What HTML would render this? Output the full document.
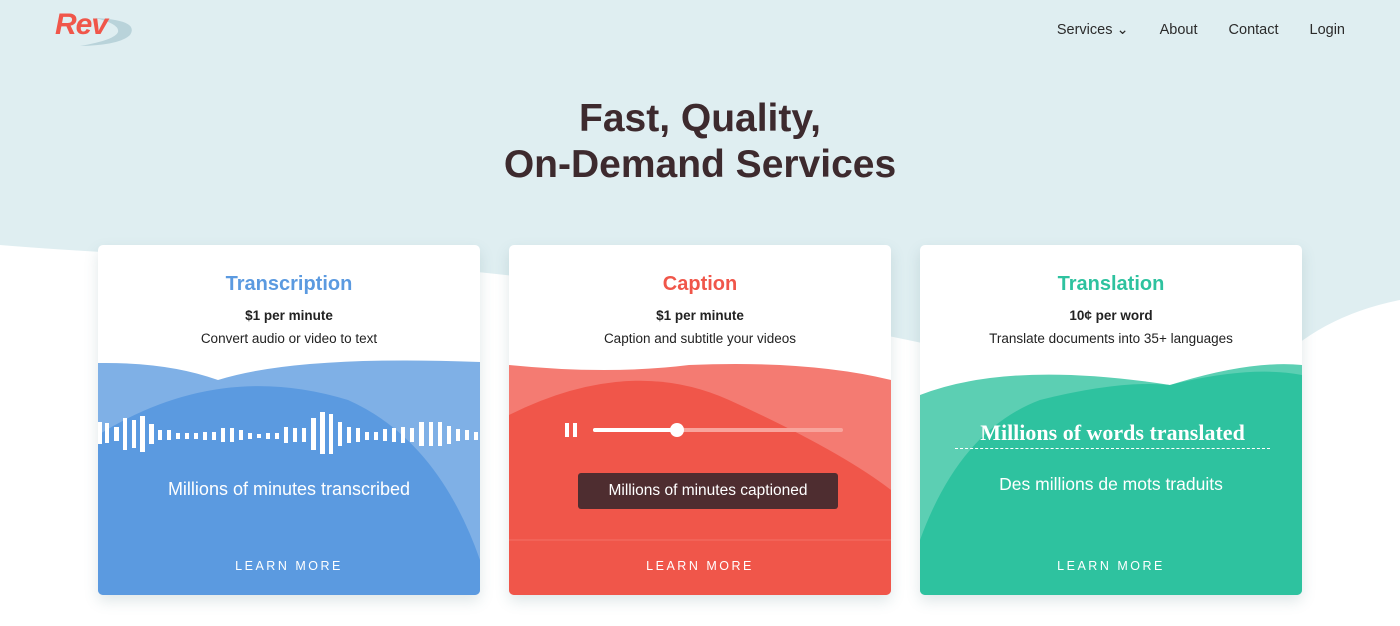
<!DOCTYPE html>
<html><head><meta charset="utf-8"><style>
*{margin:0;padding:0;box-sizing:border-box}
body{width:1400px;height:626px;overflow:hidden;background:#fff;font-family:"Liberation Sans",sans-serif;position:relative}
.bg{position:absolute;left:0;top:0}
.logo{position:absolute;left:55px;top:8px;font:italic 900 30px "Liberation Sans",sans-serif;color:#f0564a;letter-spacing:-1px}
nav{position:absolute;top:22px;right:55px;display:flex;gap:31px;font-size:14.5px;color:#2b2b2b}
h1{position:absolute;top:96px;left:0;width:1400px;text-align:center;font-size:39px;line-height:46px;font-weight:bold;color:#3d2a2e}
.card{position:absolute;top:245px;width:382px;height:350px;background:#fff;border-radius:5px;overflow:hidden;box-shadow:0 6px 14px rgba(80,120,130,.18)}
.card h2{position:absolute;top:28px;width:100%;text-align:center;font-size:20px;font-weight:bold}
.card .p{position:absolute;top:63px;width:100%;text-align:center;font-size:13.5px;font-weight:bold;color:#222}
.card .d{position:absolute;top:86px;width:100%;text-align:center;font-size:13.5px;color:#222}
.card svg{position:absolute;left:0;top:115px}
.lm{position:absolute;top:314px;width:100%;text-align:center;color:#fff;font-size:12.5px;letter-spacing:2.5px}
.t{position:absolute;width:100%;text-align:center;color:#fff;font-size:18px}
</style></head><body>
<svg class="bg" width="1400" height="626"><path d="M0,0 H1400 V300 Q1300,320 1250,395 Q1180,400 1000,360 Q600,270 300,260 Q120,255 0,245 Z" fill="#dfeef1"/></svg>
<svg class="bg" width="160" height="60"><path d="M95,18 Q140,20 130,35 Q120,45 80,46 Q115,40 118,32 Q120,24 95,18Z" fill="#b9d3da"/></svg>
<div class="logo">Rev</div>
<nav><span>Services ⌄</span><span>About</span><span>Contact</span><span>Login</span></nav>
<h1>Fast, Quality,<br>On-Demand Services</h1>

<div class="card" style="left:98px">
<h2 style="color:#5b9ae0">Transcription</h2>
<div class="p">$1 per minute</div><div class="d">Convert audio or video to text</div>
<svg width="382" height="235"><path d="M0,3 Q70,2 120,20 Q200,-5 382,2 V235 H0Z" fill="#7fb0e6"/><path d="M0,75 Q120,0 250,40 Q340,80 382,200 V235 H0Z" fill="#5b9ae0"/>
<g fill="#fff">
<rect x="0" y="62" width="4" height="22"/><rect x="7" y="63" width="4" height="20"/><rect x="16" y="67" width="5" height="14"/><rect x="25" y="58" width="4" height="32"/><rect x="34" y="60" width="4" height="28"/><rect x="42" y="56" width="5" height="36"/><rect x="51" y="64" width="5" height="20"/><rect x="60" y="70" width="4" height="10"/><rect x="69" y="70" width="4" height="10"/><rect x="78" y="73" width="4" height="6"/><rect x="87" y="73" width="4" height="6"/><rect x="96" y="73" width="4" height="6"/><rect x="105" y="72" width="4" height="8"/><rect x="114" y="72" width="4" height="8"/><rect x="123" y="68" width="4" height="14"/><rect x="132" y="68" width="4" height="14"/><rect x="141" y="70" width="4" height="10"/><rect x="150" y="73" width="4" height="6"/><rect x="159" y="74" width="4" height="4"/><rect x="168" y="73" width="4" height="6"/><rect x="177" y="73" width="4" height="6"/><rect x="186" y="67" width="4" height="16"/><rect x="195" y="68" width="4" height="14"/><rect x="204" y="68" width="4" height="14"/><rect x="213" y="58" width="5" height="32"/><rect x="222" y="52" width="5" height="42"/><rect x="231" y="54" width="4" height="40"/><rect x="240" y="62" width="4" height="24"/><rect x="249" y="67" width="4" height="16"/><rect x="258" y="68" width="4" height="14"/><rect x="267" y="72" width="4" height="8"/><rect x="276" y="72" width="4" height="8"/><rect x="285" y="69" width="4" height="12"/><rect x="294" y="68" width="4" height="14"/><rect x="303" y="67" width="4" height="16"/><rect x="312" y="68" width="4" height="14"/><rect x="321" y="62" width="5" height="24"/><rect x="331" y="62" width="4" height="24"/><rect x="340" y="62" width="4" height="24"/><rect x="349" y="66" width="4" height="18"/><rect x="358" y="69" width="4" height="12"/><rect x="367" y="70" width="4" height="10"/><rect x="376" y="72" width="4" height="8"/></g></svg>
<div class="t" style="top:234px">Millions of minutes transcribed</div>
<div class="lm">LEARN MORE</div></div>

<div class="card" style="left:509px">
<h2 style="color:#f0564a">Caption</h2>
<div class="p">$1 per minute</div><div class="d">Caption and subtitle your videos</div>
<svg width="382" height="235"><path d="M0,5 Q100,15 180,5 Q300,0 382,20 V235 H0Z" fill="#f47b72"/><path d="M0,55 Q120,-5 220,40 Q330,90 382,130 V235 H0Z" fill="#f0564a"/>
<line x1="0" y1="180" x2="382" y2="180" stroke="#f37066" stroke-width="1"/>
<rect x="56" y="63" width="4" height="14" fill="#fff"/><rect x="64" y="63" width="4" height="14" fill="#fff"/>
<rect x="84" y="68" width="250" height="4" rx="2" fill="#f8a49c"/><rect x="84" y="68" width="84" height="4" rx="2" fill="#fff"/><circle cx="168" cy="70" r="7" fill="#fff"/></svg>
<div style="position:absolute;left:69px;top:228px;width:260px;height:36px;background:#4e2d30;border-radius:3px;color:#fff;font-size:15.5px;line-height:36px;text-align:center">Millions of minutes captioned</div>
<div class="lm">LEARN MORE</div></div>

<div class="card" style="left:920px">
<h2 style="color:#2ec29f">Translation</h2>
<div class="p">10¢ per word</div><div class="d">Translate documents into 35+ languages</div>
<svg width="382" height="235"><path d="M0,35 Q90,0 250,25 Q330,0 382,5 V235 H0Z" fill="#5ccfb3"/><path d="M0,180 Q40,70 120,40 Q200,20 250,25 Q330,5 382,15 V235 H0Z" fill="#2ec29f"/></svg>
<div class="t" style="top:175px;font-family:'Liberation Serif',serif;font-weight:bold;font-size:22px;left:35px;width:315px;padding-bottom:2px;border-bottom:1px dashed #fff">Millions of words translated</div>
<div class="t" style="top:229px;font-size:17.5px">Des millions de mots traduits</div>
<div class="lm">LEARN MORE</div></div>
</body></html>
